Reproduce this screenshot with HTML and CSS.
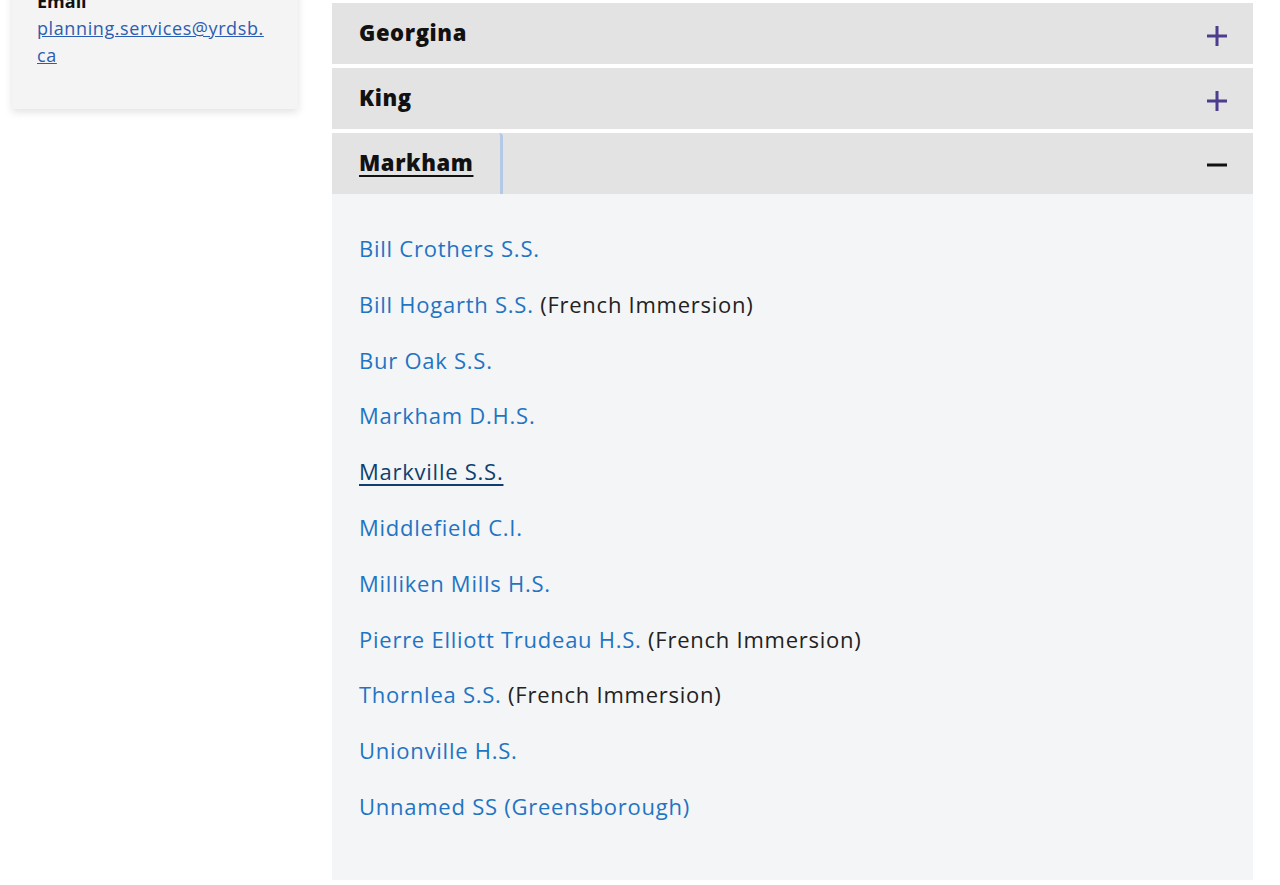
FILE: index.html
```html
<!DOCTYPE html>
<html lang="en">
<head>
<meta charset="utf-8">
<title>Secondary Schools</title>
<link rel="stylesheet" href="styles.css">
</head>
<body>
<div class="page">
  <aside class="sidebar">
    <div class="card">
      <div class="card-label">Email</div>
      <a class="card-link" href="#">planning.services@yrdsb.<wbr>ca</a>
    </div>
  </aside>
  <main class="main">
    <div class="accordion">
      <div class="acc-item">
        <div class="acc-header">
          <span class="acc-title">Georgina</span>
          <svg class="acc-icon plus" width="22" height="22" viewBox="0 0 22 22"><path d="M11 1v20M1 11h20" stroke="currentColor" stroke-width="3" fill="none"/></svg>
        </div>
      </div>
      <div class="acc-item">
        <div class="acc-header">
          <span class="acc-title">King</span>
          <svg class="acc-icon plus" width="22" height="22" viewBox="0 0 22 22"><path d="M11 1v20M1 11h20" stroke="currentColor" stroke-width="3" fill="none"/></svg>
        </div>
      </div>
      <div class="acc-item open">
        <div class="acc-header">
          <span class="acc-title focused"><span class="u">Markham</span></span>
          <svg class="acc-icon minus" width="22" height="22" viewBox="0 0 22 22"><path d="M1 11h20" stroke="currentColor" stroke-width="3" fill="none"/></svg>
        </div>
        <div class="acc-panel">
          <ul class="school-list">
            <li><a href="#">Bill Crothers S.S.</a></li>
            <li><a href="#">Bill Hogarth S.S.</a> (French Immersion)</li>
            <li><a href="#">Bur Oak S.S.</a></li>
            <li><a href="#">Markham D.H.S.</a></li>
            <li><a href="#" class="visited">Markville S.S.</a></li>
            <li><a href="#">Middlefield C.I.</a></li>
            <li><a href="#">Milliken Mills H.S.</a></li>
            <li><a href="#">Pierre Elliott Trudeau H.S.</a> (French Immersion)</li>
            <li><a href="#">Thornlea S.S.</a> (French Immersion)</li>
            <li><a href="#">Unionville H.S.</a></li>
            <li><a href="#">Unnamed SS (Greensborough)</a></li>
          </ul>
        </div>
      </div>
    </div>
  </main>
</div>
</body>
</html>
```

FILE: styles.css
```css
* { box-sizing: border-box; }
html, body { margin: 0; padding: 0; background: #ffffff; }
body {
  font-family: "Open Sans", "Noto Sans", sans-serif;
  color: #1b1b1b;
  height: 885px;
  overflow: hidden;
}
.page {
  display: flex;
  align-items: flex-start;
  padding-left: 12px;
  gap: 34px;
}
.sidebar { width: 286px; flex: none; }
.card {
  margin-top: -40px;
  background: #f4f4f4;
  padding: 28px 25px 40px 25px;
  box-shadow: 0 3px 8px rgba(0,0,0,0.12);
}
.card-label {
  font-weight: 700;
  font-size: 18px;
  line-height: 27px;
  color: #111;
}
.card-link {
  font-size: 18px;
  line-height: 27px;
  color: #2b5db2;
  text-decoration: underline;
  letter-spacing: 0.6px;
}
.main {
  width: 921px;
  flex: none;
  padding-top: 3px;
}
.acc-item { margin-bottom: 4px; }
.acc-header {
  height: 61px;
  background: #e3e3e3;
  display: flex;
  align-items: center;
  justify-content: space-between;
  padding: 0 25px 0 27px;
}
.acc-title {
  font-weight: 800;
  font-size: 22px;
  color: #111;
  letter-spacing: 0.6px;
  padding-bottom: 4px;
}
.acc-title.focused {
  align-self: stretch;
  display: flex;
  align-items: center;
  margin-left: -27px;
  padding-left: 27px;
  padding-right: 27px;
  border-right: 3px solid #b3c9e6;
  border-top-right-radius: 4px;
}
.acc-title .u {
  text-decoration: underline;
  text-decoration-thickness: 2px;
  text-underline-offset: 4px;
}
.acc-icon { display: block; margin-top: 4px; }
.acc-icon.plus { color: #4e3d8e; }
.acc-icon.minus { color: #111; margin-top: 2px; }
.acc-item.open { margin-bottom: 0; }
.acc-panel {
  background: #f4f5f6;
  height: 686px;
  padding: 27px 27px 0 27px;
}
.school-list {
  list-style: none;
  margin: 0;
  padding: 0;
}
.school-list li {
  font-size: 22px;
  line-height: 55.8px;
  color: #222;
  letter-spacing: 0.75px;
}
.school-list a {
  color: #1f74c4;
  text-decoration: none;
}
.school-list a.visited {
  color: #0e3f70;
  text-decoration: underline;
  text-decoration-thickness: 2px;
  text-underline-offset: 4px;
}
```
